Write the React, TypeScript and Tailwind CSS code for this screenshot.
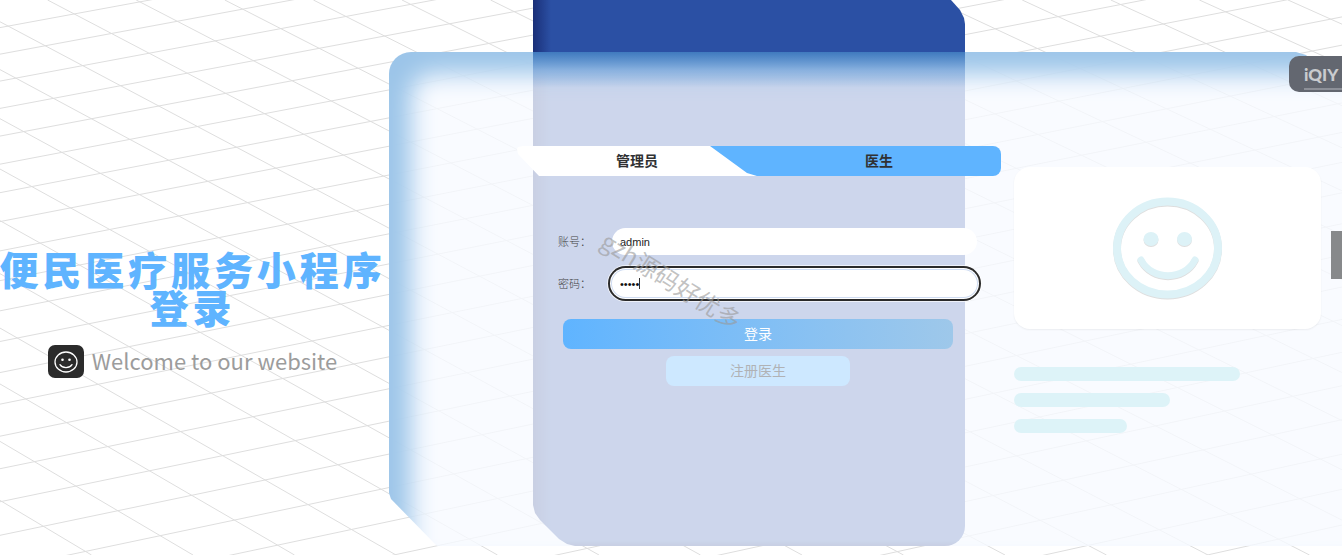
import React from "react";

const range = (from: number, to: number) =>
  Array.from({ length: to - from + 1 }, (_, i) => from + i);

/* Floor grid seen in perspective: two families of nearly parallel lines. */
function GridBackdrop() {
  const rising = range(0, 36).map((u) => {
    const left = 3839.6 / (1 - 0.00687 * u) - 3812;
    const top = 150 + 142 * u;
    return { y1: left, y2: left * (1 - 1500 / top) };
  });
  const falling = range(-10, 15).map((d) => ({ x1: -41 + 88.6 * d, x2: 1005 + 101.5 * d }));
  return (
    <svg
      aria-hidden="true"
      className="absolute inset-0 h-full w-full"
      viewBox="0 0 1342 555"
      preserveAspectRatio="xMinYMin slice"
      stroke="#dedede"
      strokeWidth="1"
    >
      {rising.map((l, i) => (
        <line key={`r${i}`} x1={0} y1={l.y1} x2={1500} y2={l.y2} />
      ))}
      {falling.map((l, i) => (
        <line key={`f${i}`} x1={l.x1} y1={0} x2={l.x2} y2={555} />
      ))}
    </svg>
  );
}

function Intro() {
  return (
    <section className="flex w-[385px] shrink-0 flex-col items-center pt-[249px]">
      <h1 className="text-center text-[39px] leading-[38px] font-black tracking-widest whitespace-nowrap text-[#5fb4ff]">
        便民医疗服务小程序
        <br />
        登录
      </h1>
      <div className="mt-5 flex items-center gap-2">
        <span className="flex h-[33px] w-9 items-center justify-center rounded-[7px] bg-[#2b2b2b]">
          <svg width="24" height="22" viewBox="0 0 24 22" fill="none" stroke="#fff" strokeWidth="1.3" strokeLinecap="round">
            <ellipse cx="12" cy="11" rx="11" ry="10" />
            <path d="M6 13.6c2.6 4 9.4 4 12 0" />
            <circle cx="8.5" cy="8.8" r="1.3" fill="#fff" stroke="none" />
            <circle cx="15.5" cy="8.8" r="1.3" fill="#fff" stroke="none" />
          </svg>
        </span>
        <p className="pb-1 text-[22px] leading-7 whitespace-nowrap text-[#9c9c9c]">Welcome to our website</p>
      </div>
    </section>
  );
}

function LoginForm() {
  return (
    <form className="w-[484px] shrink-0" onSubmit={(e) => e.preventDefault()}>
      <div className="grid h-[30px] grid-cols-[240px_1fr] rounded-lg bg-[linear-gradient(to_right,transparent_192px,#5fb4ff_192px)] text-sm font-bold text-[#303133]">
        <button
          type="button"
          className="bg-white pb-0.5 [clip-path:polygon(0_3px,1px_1px,6px_0,193px_0,230px_27px,240px_30px,22px_30px,1px_8px)]"
        >
          管理员
        </button>
        <button type="button" className="pb-0.5">
          医生
        </button>
      </div>

      <div className="mt-[52px] flex items-center pl-[41px]">
        <label htmlFor="account" className="w-[54px] text-[11px] font-light text-[#444]">
          账号：
        </label>
        <input
          id="account"
          type="text"
          defaultValue="admin"
          className="h-[27px] w-[365px] rounded-full bg-white px-2 font-['Liberation_Sans'] text-[11px] text-[#222] outline-none"
        />
      </div>
      <div className="mt-[15px] flex items-center pl-[41px]">
        <label htmlFor="secret" className="w-[54px] text-[11px] font-light text-[#444]">
          密码：
        </label>
        <div className="relative">
          <input
            id="secret"
            type="password"
            defaultValue="admin"
            className="block h-[27px] w-[365px] rounded-full bg-white px-2 font-['Liberation_Sans'] text-[11px] text-[#111] shadow-[0_0_0_1px_#cfdcf2,0_0_0_2px_#fff,0_0_0_4px_#2a2a2a,0_0_0_5px_#ffffffaa] outline-none"
          />
          <span className="absolute top-2 left-[27px] h-[11px] w-px bg-[#333]" />
        </div>
      </div>

      <div className="flex flex-col items-center gap-[7px] pt-[22px] pr-[48px] pl-[46px]">
        <button
          type="submit"
          className="h-[30px] w-full rounded-lg bg-linear-to-r from-[#5fb4ff] to-[#9ec8ea] pb-0.5 text-sm text-white"
        >
          登录
        </button>
        <button type="button" className="h-[30px] w-[184px] rounded-lg bg-[#cde8ff] pb-0.5 text-sm text-[#b0b2b5]">
          注册医生
        </button>
      </div>
    </form>
  );
}

function Preview() {
  return (
    <div className="min-w-0 flex-1 pt-[21px]">
      <div className="flex h-[162px] items-center justify-center rounded-2xl bg-white shadow-[0_1px_2px_#0000000f]">
        <svg
          className="drop-shadow-[0_1px_0_#00000022]"
          width="110"
          height="102"
          viewBox="0 0 110 102"
          fill="none"
          stroke="#ddf2f7"
          strokeWidth="8"
          strokeLinecap="round"
        >
          <ellipse cx="54.5" cy="51" rx="50.5" ry="46.5" />
          <path d="M28 63c11 21 43 21 54 0" strokeWidth="7" />
          <ellipse cx="38" cy="42" rx="7.500" ry="7" fill="#ddf2f7" stroke="none" />
          <ellipse cx="71.500" cy="42" rx="7.500" ry="7" fill="#ddf2f7" stroke="none" />
        </svg>
      </div>
      <div className="mt-[38px] flex flex-col gap-3">
        <span className="h-[14px] w-[226px] rounded-full bg-[#ddf3f8]" />
        <span className="h-[14px] w-[156px] rounded-full bg-[#ddf3f8]" />
        <span className="h-[14px] w-[113px] rounded-full bg-[#ddf3f8]" />
      </div>
    </div>
  );
}

export default function App() {
  return (
    <main className="relative flex h-screen overflow-hidden bg-white font-['Noto_Sans_CJK_SC',sans-serif]">
      <GridBackdrop />
      <div className="relative z-10 flex min-w-0 flex-1 gap-1">
        <Intro />
        <section className="-mr-2 grid min-w-0 flex-1 grid-cols-1 items-start">
          <div className="ml-36 h-[546px] w-[432px] rounded-b-[20px] bg-[#2b50a4] bg-[linear-gradient(to_right,#1a2f78,#2b50a400_18px),linear-gradient(to_top,#1a2f78,#2b50a400_6px)] [clip-path:polygon(0_0,418px_0,427px_10px,431px_18px,100%_24px,100%_100%,42px_100%,34px_calc(100%-2px),26px_calc(100%-7px),7px_calc(100%-26px),2px_calc(100%-33px),0_calc(100%-41px))] [grid-area:1/1]" />
          <div className="relative mt-[52px] h-[494px] rounded-tl-[22px] bg-[#f7faffca] shadow-[inset_22px_22px_24px_#9cc5e9] [clip-path:polygon(0_0,calc(100%-54px)_0,calc(100%-44px)_3px,100%_46px,100%_100%,48px_100%,2px_calc(100%-47px),0_calc(100%-53px))] [grid-area:1/1]">
            <div className="ml-36 h-9 w-[432px] bg-linear-to-b from-[#2867b4cc] via-[#3f7cc855] to-transparent" />
            <div className="flex gap-[13px] pt-[58px] pr-[29px] pl-[128px]">
              <LoginForm />
              <Preview />
            </div>
          </div>
        </section>
      </div>

      <p className="pointer-events-none absolute top-[264px] left-[592px] z-20 rotate-[32deg] text-2xl whitespace-nowrap text-[#99999999]">
        gzh源码好优多
      </p>
      <div className="absolute top-14 right-0 z-20 h-9 w-[53px] overflow-hidden rounded-l-[10px] bg-[#636770] pt-[10px] pl-[15px]">
        <p className="border-b-2 border-[#8d9098] pb-[5px] font-['Lato'] text-[17px] leading-[17px] font-black text-[#c9cbce]">
          iQIY
        </p>
      </div>
      <div className="absolute top-[231px] right-0 z-20 h-12 w-[11px] bg-[#87898b]" />
    </main>
  );
}
